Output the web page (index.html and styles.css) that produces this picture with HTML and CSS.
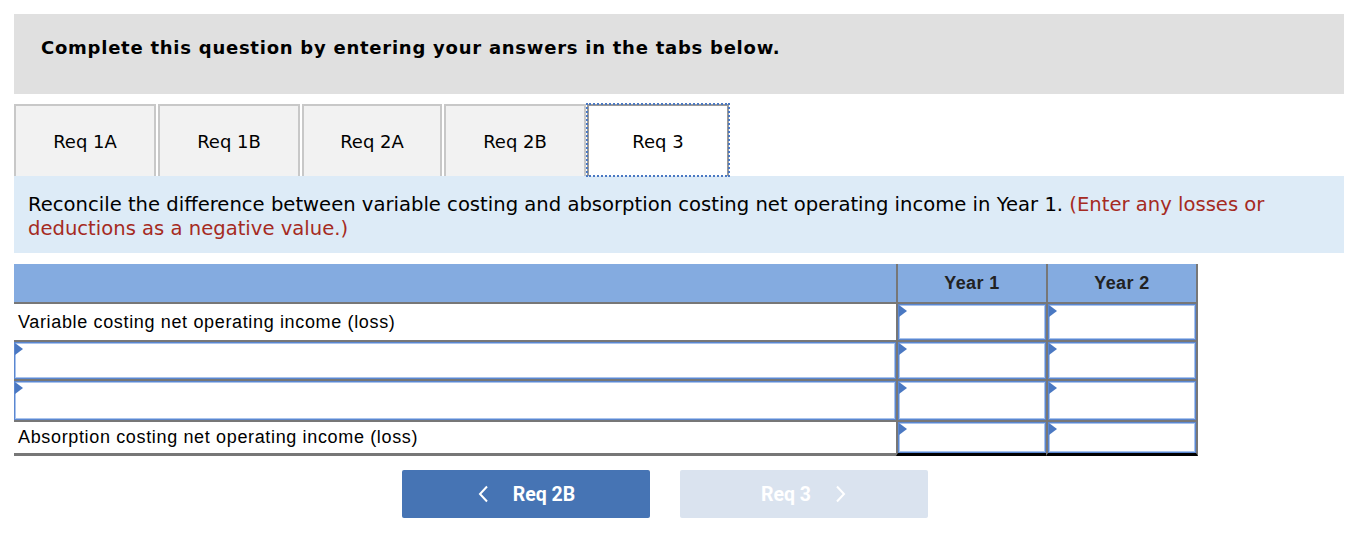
FILE: index.html
```html
<!DOCTYPE html>
<html>
<head>
<meta charset="utf-8">
<link rel="stylesheet" href="styles.css">
</head>
<body>
<div class="page">
  <div class="banner">Complete this question by entering your answers in the tabs below.</div>
  <div class="tabs">
    <div class="tab">Req 1A</div>
    <div class="tab">Req 1B</div>
    <div class="tab narrow">Req 2A</div>
    <div class="tab">Req 2B</div>
    <div class="tab active">Req 3</div>
  </div>
  <div class="info">Reconcile the difference between variable costing and absorption costing net operating income in Year 1. <span class="hint">(Enter any losses or deductions as a negative value.)</span></div>
  <div class="grid">
    <div class="cell head label"></div>
    <div class="cell head yr">Year 1</div>
    <div class="cell head yr end">Year 2</div>

    <div class="cell r1 label text">Variable costing net operating income (loss)</div>
    <div class="cell r1 yr"><div class="inp"></div></div>
    <div class="cell r1 yr end"><div class="inp"></div></div>

    <div class="cell r2 label"><div class="inp"></div></div>
    <div class="cell r2 yr"><div class="inp"></div></div>
    <div class="cell r2 yr end"><div class="inp"></div></div>

    <div class="cell r3 label"><div class="inp"></div></div>
    <div class="cell r3 yr"><div class="inp"></div></div>
    <div class="cell r3 yr end"><div class="inp"></div></div>

    <div class="cell r4 label text">Absorption costing net operating income (loss)</div>
    <div class="cell r4 yr"><div class="inp"></div></div>
    <div class="cell r4 yr end"><div class="inp"></div></div>
  </div>
  <div class="nav">
    <div class="btn prev"><svg width="12" height="18" viewBox="0 0 12 18"><path d="M10 1.5 L3 9 L10 16.5" fill="none" stroke="#fff" stroke-width="2"/></svg><span>Req 2B</span></div>
    <div class="btn next"><span>Req 3</span><svg width="12" height="18" viewBox="0 0 12 18"><path d="M2 1.5 L9 9 L2 16.5" fill="none" stroke="#fff" stroke-width="2"/></svg></div>
  </div>
</div>
</body>
</html>
```
FILE: styles.css
```css
html, body { margin: 0; padding: 0; background: #fff; }
.page { padding: 14px 8px 0 14px; font-family: "DejaVu Sans", Verdana, sans-serif; color: #000; }
.banner { background: #e0e0e0; height: 80px; box-sizing: border-box; padding: 0 0 13px 27px; display: flex; align-items: center; font-weight: bold; font-size: 18px; letter-spacing: 0.75px; }
.tabs { display: flex; margin-top: 10px; height: 72px; }
.tab { width: 142px; box-sizing: border-box; border: 2px solid #c8c8c8; border-bottom: none; background: #f2f2f2; display: flex; align-items: center; justify-content: center; font-size: 18px; margin-right: 2px; }
.tab.narrow { width: 140px; }
.tab.active { background: #fff; border: 2px solid #999; border-bottom: none; outline: 2px dotted #4a78c2; outline-offset: -1px; margin-right: 0; margin-left: -1px; }
.info { background: #ddebf7; padding: 17px 14px 0 14px; font-size: 19.6px; line-height: 24px; height: 77px; box-sizing: border-box; }
.hint { color: #a52a22; }
.grid { margin-top: 11px; display: grid; grid-template-columns: 882px 150px 152px; width: 1184px; font-family: "Liberation Sans", Arial, sans-serif; font-size: 18px; }
.cell { box-sizing: border-box; border-bottom: 2px solid #777; display: flex; align-items: stretch; }
.yr { border-left: 2px solid #777; }
.yr.end { border-right: 2px solid #777; }
.head { background: #84abe0; height: 40px; font-weight: bold; color: #222; align-items: center; justify-content: center; letter-spacing: 0.4px; }
.r1 { height: 38px; }
.r2 { height: 39px; }
.r3 { height: 41px; }
.r4 { height: 34px; border-bottom-width: 3px; }
.r4.yr { border-bottom-color: #000; }
.text { align-items: center; padding-left: 4px; letter-spacing: 0.65px; }
.inp { position: relative; flex: 1; border: 1px solid #5b87d0; box-shadow: inset 0 0 0 1px #a9c3ec; background: #fff; }
.inp::before { content: ""; position: absolute; left: 0; top: 0; border-left: 8px solid #4a78c2; border-top: 6px solid transparent; border-bottom: 6px solid transparent; }
.nav { display: flex; gap: 30px; margin: 14px 0 0 388px; }
.btn { width: 248px; height: 48px; border-radius: 2px; display: flex; align-items: center; justify-content: center; gap: 24px; color: #fff; font-family: Roboto, "Liberation Sans", sans-serif; font-weight: bold; font-size: 19.5px; }
.prev { background: #4674b4; }
.next { background: #dae3ef; }
```
